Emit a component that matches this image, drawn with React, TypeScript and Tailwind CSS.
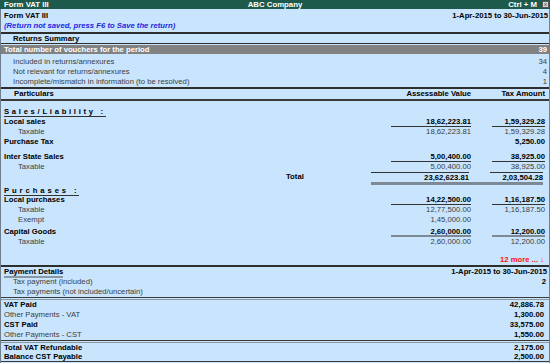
import React from "react";

const F = { fontFamily: '"Liberation Sans", Arial, sans-serif' };

function ValRow({
  label,
  a,
  t,
  bold,
  indent,
  underline,
  thick,
  h = "h-[10px] leading-[10px]",
}: {
  label: string;
  a?: string;
  t?: string;
  bold?: boolean;
  indent?: boolean;
  underline?: boolean;
  thick?: boolean;
  h?: string;
}) {
  const txt = bold ? "font-bold text-black" : "text-[#3c3c3c]";
  const ul = underline
    ? thick
      ? "border-b-2 border-[#7d8a96]"
      : "border-b border-[#333]"
    : "";
  return (
    <div className={`flex ${h} ${txt}`}>
      <div className={`flex-1 ${indent ? "pl-[17px]" : "pl-[3px]"}`}>{label}</div>
      <div className={`w-[80px] text-right ${a !== undefined ? ul : ""}`}>{a ?? ""}</div>
      <div className="w-[21px]" />
      <div className={`w-[53px] text-right ${t !== undefined ? ul : ""}`}>{t ?? ""}</div>
      <div className="w-[4px]" />
    </div>
  );
}

function SimpleRow({
  label,
  v,
  bold,
  indent,
  h = "h-[10px] leading-[10px]",
  pr = "pr-[5px]",
}: {
  label: string;
  v?: string;
  bold?: boolean;
  indent?: boolean;
  h?: string;
  pr?: string;
}) {
  return (
    <div className={`flex ${h} ${bold ? "font-bold text-black" : "text-[#3c3c3c]"}`}>
      <div className={`flex-1 ${indent ? "pl-[12px]" : "pl-[3px]"}`}>{label}</div>
      <div className={`text-right ${pr}`}>{v}</div>
    </div>
  );
}

function DoubleLine() {
  return <div className="h-[3px] border-t border-b border-t-[#3a3a3a] border-b-[#8a98a6]" />;
}

export default function App() {
  return (
    <div
      className="w-[550px] h-[363px] overflow-hidden bg-[#c9e5fd] text-[7.7px] flex flex-col"
      style={F}
    >
      {/* title bar */}
      <div className="h-[9px] leading-[9px] bg-[#1e5a4b] text-white font-bold grid grid-cols-[1fr_auto_1fr] text-[7.8px]">
        <div className="pl-[4px]">Form VAT III</div>
        <div>ABC Company</div>
        <div className="flex justify-end items-center gap-[5px] pr-[1px]">
          <span>Ctrl + M</span>
          <span className="w-[7px] h-[7px] bg-[#d6d6d6] border border-[#555] text-[#333] text-[6px] leading-[5px] text-center font-normal">
            x
          </span>
        </div>
      </div>

      <div className="flex-1 flex flex-col border-x border-[#6f7f8f]">
        <div className="pt-[2px]" />
        <div className="flex h-[10px] leading-[10px] font-bold text-black">
          <div className="flex-1 pl-[3px]">Form VAT III</div>
          <div className="pr-[1px]">1-Apr-2015 to 30-Jun-2015</div>
        </div>
        <div className="h-[9px] leading-[9px] pl-[3px] font-bold italic text-[#2424e0]">
          (Return not saved, press F6 to Save the return)
        </div>
        <div className="mt-[2px] border-t-2 border-[#2e2e2e]" />
        <div className="h-[9px] leading-[9px] pl-[12px] font-bold text-black">Returns Summary</div>
        <div className="h-[2px] border-t border-[#2e2e2e]" />
        <div className="h-[9px] leading-[9px] bg-[#828282] text-white font-bold flex">
          <div className="flex-1 pl-[3px]">Total number of vouchers for the period</div>
          <div className="pr-[2px]">39</div>
        </div>
        <div className="h-[3px]" />
        <SimpleRow label="Included in returns/annexures" v="34" indent pr="pr-[2px]" />
        <SimpleRow label="Not relevant for returns/annexures" v="4" indent pr="pr-[2px]" />
        <SimpleRow label="Incomplete/mismatch in information (to be resolved)" v="1" indent pr="pr-[2px]" />
        <div className="border-t-2 border-[#2e2e2e]" />
        <div className="flex h-[10px] leading-[10px] font-bold text-black">
          <div className="flex-1 pl-[13px]">Particulars</div>
          <div className="w-[80px] text-right">Assessable Value</div>
          <div className="w-[21px]" />
          <div className="w-[53px] text-right">Tax Amount</div>
          <div className="w-[4px]" />
        </div>
        <div className="border-t-2 border-[#3a3a3a]" />

        <div className="mt-[6px] h-[10px] leading-[10px] pl-[3px]">
          <span className="font-bold text-black tracking-[2.7px] border-b border-[#333]">
            Sales/Liability :
          </span>
        </div>
        <ValRow label="Local sales" a="18,62,223.81" t="1,59,329.28" bold underline />
        <ValRow label="Taxable" a="18,62,223.81" t="1,59,329.28" indent />
        <ValRow label="Purchase Tax" t="5,250.00" bold />
        <div className="h-[5px]" />
        <ValRow label="Inter State Sales" a="5,00,400.00" t="38,925.00" bold underline />
        <ValRow label="Taxable" a="5,00,400.00" t="38,925.00" indent />
        {/* Total */}
        <div className="flex h-[13px] font-bold text-black">
          <div className="w-[285px]" />
          <div className="w-[85px] leading-[10px]">Total</div>
          <div className="flex border-b-[3px] border-[#7d8a96] leading-[10px]">
            <div className="w-[98px] text-right border-t border-[#333]">23,62,623.81</div>
            <div className="w-[21px]" />
            <div className="w-[53px] text-right border-t border-[#333]">2,03,504.28</div>
          </div>
          <div className="w-[4px]" />
        </div>

        <div className="mt-[1px] h-[9px] leading-[9px] pl-[3px]">
          <span className="font-bold text-black tracking-[2.9px] border-b border-[#333]">
            Purchases :
          </span>
        </div>
        <ValRow label="Local purchases" a="14,22,500.00" t="1,16,187.50" bold underline />
        <ValRow label="Taxable" a="12,77,500.00" t="1,16,187.50" indent />
        <ValRow label="Exempt" a="1,45,000.00" indent />
        <div className="h-[2px]" />
        <ValRow label="Capital Goods" a="2,60,000.00" t="12,200.00" bold underline thick />
        <ValRow label="Taxable" a="2,60,000.00" t="12,200.00" indent />

        <div className="mt-[8px] h-[10px] leading-[10px] text-right pr-[5px] font-bold text-[#ff1010]">
          12 more ... ↓
        </div>
        <div className="border-t-2 border-[#2e2e2e]" />
        <div className="flex h-[10px] leading-[10px] font-bold text-black">
          <div className="flex-1 pl-[3px]">
            <span className="border-b-2 border-[#8a98a6]">Payment Details</span>
          </div>
          <div className="pr-[2px]">1-Apr-2015 to 30-Jun-2015</div>
        </div>
        <div className="flex h-[10px] leading-[10px] text-[#3c3c3c]">
          <div className="flex-1 pl-[12px]">Tax payment (included)</div>
          <div className="pr-[3px] font-bold text-black">2</div>
        </div>
        <SimpleRow label="Tax payments (not included/uncertain)" indent />
        <DoubleLine />
        <SimpleRow label="VAT Paid" v="42,886.78" bold />
        <div className="flex h-[10px] leading-[10px]">
          <div className="flex-1 pl-[3px] text-[#3c3c3c]">Other Payments - VAT</div>
          <div className="pr-[5px] font-bold text-black">1,300.00</div>
        </div>
        <SimpleRow label="CST Paid" v="33,575.00" bold />
        <div className="flex h-[10px] leading-[10px]">
          <div className="flex-1 pl-[3px] text-[#3c3c3c]">Other Payments - CST</div>
          <div className="pr-[5px] font-bold text-black">1,550.00</div>
        </div>
        <DoubleLine />
        <SimpleRow label="Total VAT Refundable" v="2,175.00" bold h="h-[9px] leading-[9px]" />
        <SimpleRow label="Balance CST Payable" v="2,500.00" bold h="h-[9px] leading-[9px]" />
        <div className="border-t border-[#3a3a3a]" />
      </div>
    </div>
  );
}
